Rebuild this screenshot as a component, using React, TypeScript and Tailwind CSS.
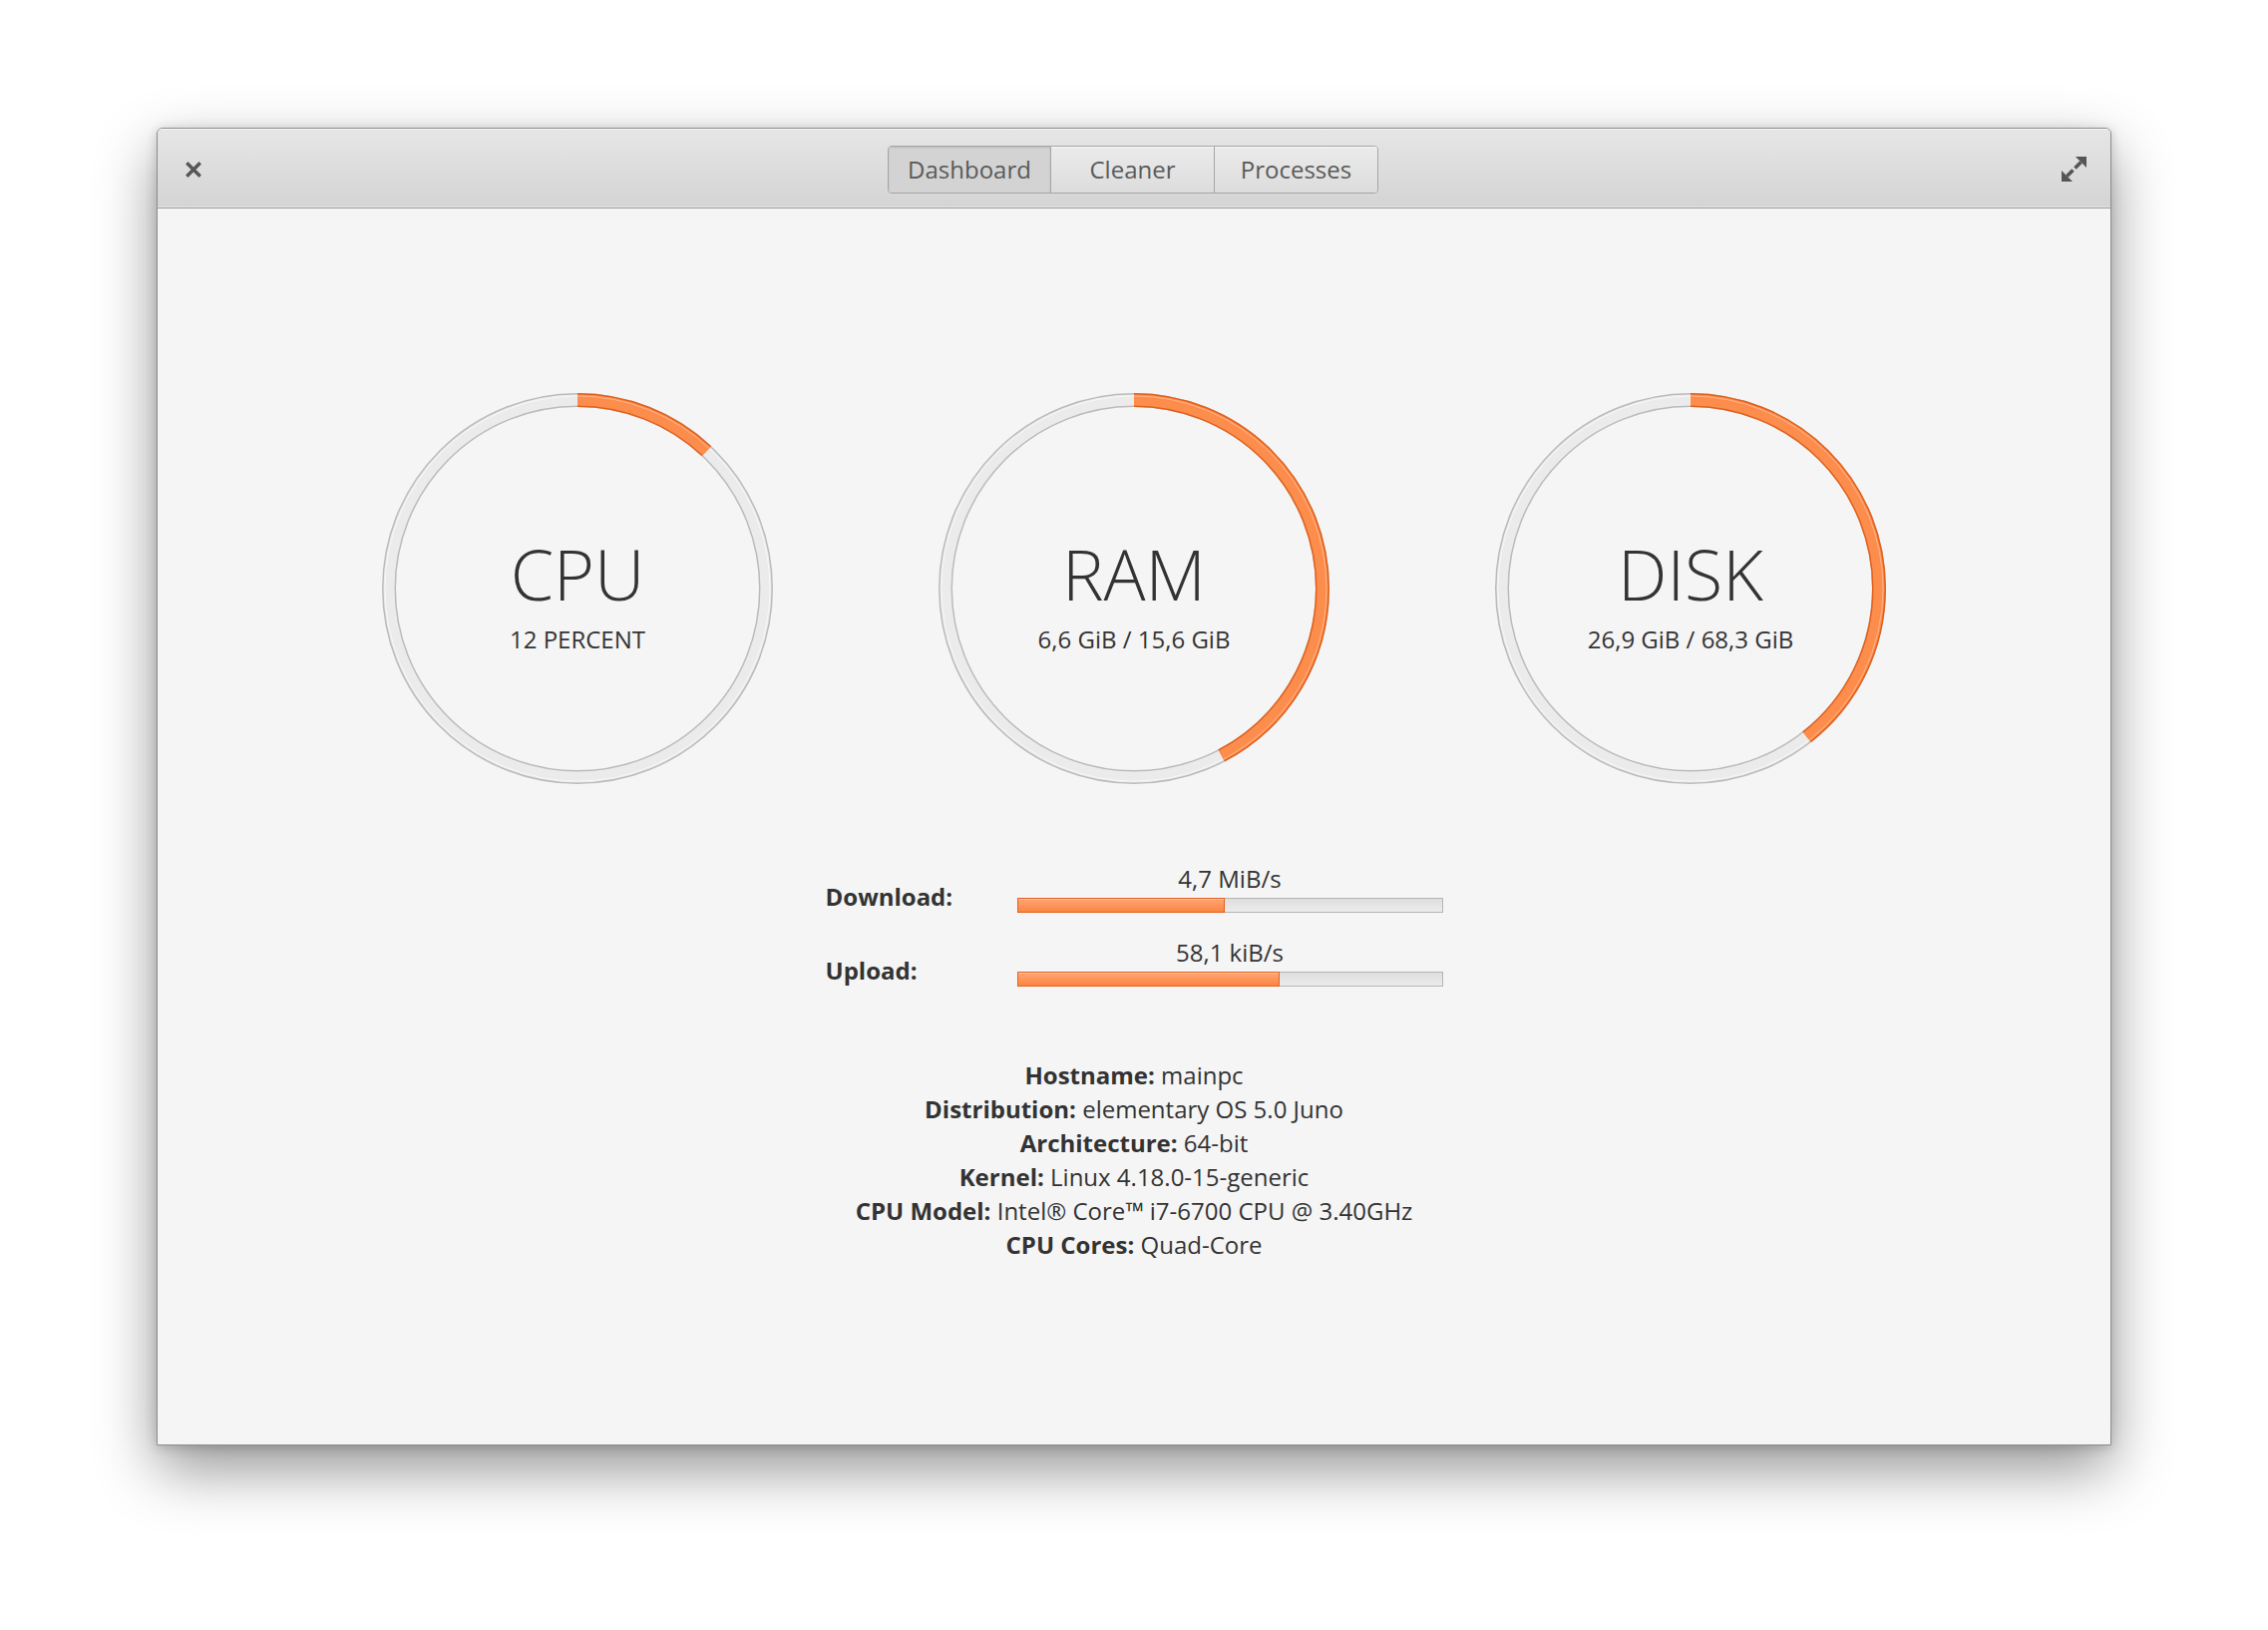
import React from "react";

// Anillo de uso: pista gris + arco naranja que arranca arriba y gira en sentido horario.
function Gauge({ label, detail, pct }: { label: string; detail: string; pct: number }) {
  const r = 189;
  const circ = 2 * Math.PI * r;
  const len = (pct / 100) * circ;
  return (
    <div className="relative flex h-[394px] w-[394px] flex-col items-center justify-center pt-[16px]">
      <svg width="394" height="394" viewBox="0 0 394 394" className="absolute inset-0">
        <circle cx="197" cy="197" r={r} fill="none" stroke="#bbbbbb" strokeWidth="14" />
        <circle cx="197" cy="197" r={r} fill="none" stroke="#ebebeb" strokeWidth="11" />
        <circle cx="197" cy="197" r={r + 4} fill="none" stroke="#f7f7f7" strokeWidth="1" />
        <g transform="rotate(-90 197 197)">
          <circle cx="197" cy="197" r={r} fill="none" stroke="#e2611c" strokeWidth="14" strokeDasharray={`${len} ${circ}`} />
          <circle cx="197" cy="197" r={r} fill="none" stroke="#fc8d4d" strokeWidth="11" strokeDasharray={`${len} ${circ}`} />
          <circle cx="197" cy="197" r={r + 4} fill="none" stroke="#ffb385" strokeWidth="1" strokeDasharray={`${(len * (r + 4)) / r} ${circ * 2}`} />
        </g>
      </svg>
      <div className="relative text-[70px] font-light leading-none text-[#333]">{label}</div>
      <div className="relative mt-[16px] text-[24px] leading-[30px] text-[#333]">{detail}</div>
    </div>
  );
}

function NetRow({ label, value, pct }: { label: string; value: string; pct: number }) {
  return (
    <div className="flex items-end">
      <div className="mb-[1px] w-[192px] text-[24px] font-bold leading-[30px] text-[#333]">{label}</div>
      <div className="flex w-[427px] flex-col items-center">
        <div className="text-[24px] leading-[30px] text-[#333]">{value}</div>
        <div className="mt-[4px] flex h-[15px] w-full border border-[#b5b5b5] bg-gradient-to-b from-[#dedede] to-[#ececec]">
          <div
            className="-my-px -ml-px h-[15px] border border-[#e2611c] bg-gradient-to-b from-[#ffa574] to-[#fb8541] shadow-[inset_0_1px_0_rgba(255,200,170,0.8)]"
            style={{ width: `${pct}%` }}
          />
        </div>
      </div>
    </div>
  );
}

const info: [string, string][] = [
  ["Hostname:", "mainpc"],
  ["Distribution:", "elementary OS 5.0 Juno"],
  ["Architecture:", "64-bit"],
  ["Kernel:", "Linux 4.18.0-15-generic"],
  ["CPU Model:", "Intel® Core™ i7-6700 CPU @ 3.40GHz"],
  ["CPU Cores:", "Quad-Core"],
];

export default function App() {
  const tabs = ["Dashboard", "Cleaner", "Processes"];
  return (
    <div className="h-[1634px] w-[2274px] bg-white pl-[157px] pt-[128px] font-['Open_Sans','Noto_Sans',sans-serif]">
      <div className="flex h-[1321px] w-[1960px] flex-col overflow-hidden rounded-t-[6px] border border-[#8c8c8c] bg-[#f5f5f5] shadow-[0_24px_60px_rgba(0,0,0,0.42),0_2px_12px_rgba(0,0,0,0.18)]">
        {/* Barra de título */}
        <div className="flex h-[80px] shrink-0 items-center border-b border-[#9a9a9a] bg-gradient-to-b from-[#e6e6e6] to-[#d4d4d4] shadow-[inset_0_1px_0_rgba(255,255,255,0.7),inset_0_-1px_0_rgba(255,255,255,0.45)]">
          <div className="ml-[28px] mt-[2px] flex w-[16px] items-center">
            <svg width="16" height="16" viewBox="0 0 16 16">
              <path d="M2.5 2.5L13.5 13.5M13.5 2.5L2.5 13.5" stroke="#555" strokeWidth="3.4" strokeLinecap="square" />
            </svg>
          </div>
          <div className="mt-[3px] flex flex-1 justify-center pl-[3px]">
            <div className="flex h-[48px] overflow-hidden rounded-[4px] border border-[#a6a6a6]">
              {tabs.map((t, i) => (
                <div
                  key={t}
                  className={
                    i === 0
                      ? "flex w-[162px] items-center justify-center bg-[#d3d3d3] text-[24px] text-[#5a5a5a] shadow-[inset_0_1px_2px_rgba(0,0,0,0.12)]"
                      : "flex w-[164px] items-center justify-center border-l border-[#a6a6a6] bg-gradient-to-b from-[#ebebeb] to-[#dcdcdc] text-[24px] text-[#5a5a5a] shadow-[inset_0_1px_0_rgba(255,255,255,0.6)]"
                  }
                >
                  {t}
                </div>
              ))}
            </div>
          </div>
          <div className="mr-[24px] mt-[2px] flex w-[25px] items-center">
            <svg width="25" height="25" viewBox="0 0 25 25">
              <path d="M14 0H25V11Z" fill="#555" />
              <path d="M0 14V25H11Z" fill="#555" />
              <path d="M19.5 5.5L13.5 11.5M5.5 19.5L11.5 13.5" stroke="#555" strokeWidth="3.6" />
            </svg>
          </div>
        </div>

        {/* Contenido */}
        <div className="flex flex-1 flex-col items-center pt-[184px]">
          <div className="flex gap-[164px]">
            <Gauge label="CPU" detail="12 PERCENT" pct={12} />
            <Gauge label="RAM" detail="6,6 GiB / 15,6 GiB" pct={42.3} />
            <Gauge label="DISK" detail="26,9 GiB / 68,3 GiB" pct={39.4} />
          </div>

          <div className="mt-[79px] flex flex-col gap-[25px]">
            <NetRow label="Download:" value="4,7 MiB/s" pct={49} />
            <NetRow label="Upload:" value="58,1 kiB/s" pct={62} />
          </div>

          <div className="mt-[72px] flex flex-col items-center text-[24px] leading-[34px] text-[#333]">
            {info.map(([k, v]) => (
              <div key={k}>
                <span className="font-bold">{k}</span> {v}
              </div>
            ))}
          </div>
        </div>
      </div>
    </div>
  );
}
